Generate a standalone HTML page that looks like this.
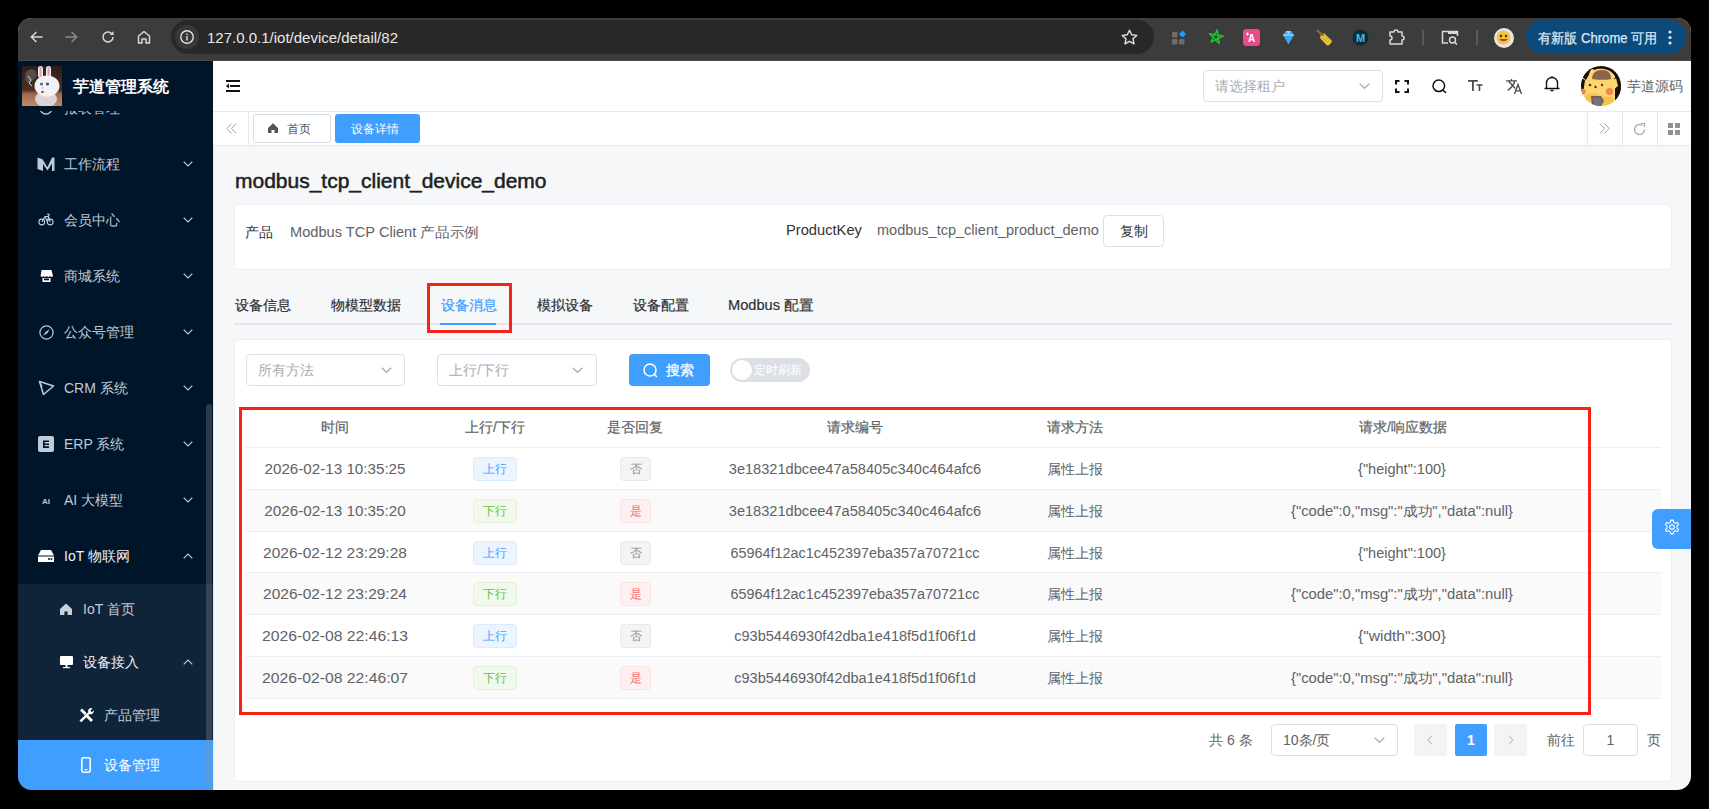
<!DOCTYPE html>
<html><head><meta charset="utf-8"><style>
*{box-sizing:border-box;margin:0;padding:0}
html,body{width:1709px;height:809px;overflow:hidden;background:#000;font-family:"Liberation Sans",sans-serif}
#win{position:absolute;left:0;top:0;width:1709px;height:809px;clip-path:inset(18px 18px 19px 18px round 14px);background:#f5f7f9;overflow:hidden}
.a{position:absolute}
.t{position:absolute;white-space:nowrap;line-height:1}
svg{position:absolute;overflow:visible}
</style></head><body><div id="win">
<div class="a" style="left:0px;top:0px;width:1709px;height:61px;background:#3c3c3c"></div>
<div class="a" style="left:0px;top:60px;width:1709px;height:1px;background:#4a4a4a"></div>
<div class="a" style="left:171px;top:20px;width:983px;height:34px;background:#282828;border-radius:17px"></div>
<div class="a" style="left:175px;top:25px;width:24px;height:24px;background:#383838;border-radius:12px"></div>
<svg style="left:180px;top:30px;" width="14" height="14" viewBox="0 0 14 14"><circle cx="7" cy="7" r="6.2" fill="none" stroke="#e3e3e3" stroke-width="1.4"/><rect x="6.3" y="6" width="1.4" height="4.5" fill="#e3e3e3"/><rect x="6.3" y="3.6" width="1.4" height="1.4" fill="#e3e3e3"/></svg>
<div class="t" style="left:207px;top:27.0px;height:21px;line-height:21px;font-size:15px;color:#e8e8e8;font-weight:normal;">127.0.0.1/iot/device/detail/82</div>
<svg style="left:30px;top:31px;" width="13" height="12" viewBox="0 0 13 12"><path d="M12.5 6H1.5M6.5 1L1.3 6l5.2 5" fill="none" stroke="#d8d8d8" stroke-width="1.5"/></svg>
<svg style="left:65px;top:31px;" width="13" height="12" viewBox="0 0 13 12"><path d="M0.5 6H11.5M6.5 1l5.2 5-5.2 5" fill="none" stroke="#8a8a8a" stroke-width="1.5"/></svg>
<svg style="left:101px;top:30px;" width="14" height="14" viewBox="0 0 14 14"><path d="M12 7a5 5 0 1 1-1.5-3.6" fill="none" stroke="#d8d8d8" stroke-width="1.5"/><path d="M12.6 1v4h-4z" fill="#d8d8d8"/></svg>
<svg style="left:137px;top:30px;" width="14" height="14" viewBox="0 0 14 14"><path d="M1.5 13V6L7 1.5 12.5 6v7H9V9H5v4z" fill="none" stroke="#d8d8d8" stroke-width="1.5" stroke-linejoin="round"/></svg>
<svg style="left:1121px;top:29px;" width="17" height="16" viewBox="0 0 17 16"><path d="M8.5 1.2l2.2 4.6 5 .6-3.7 3.4 1 5-4.5-2.5-4.5 2.5 1-5L1.3 6.4l5-.6z" fill="none" stroke="#e3e3e3" stroke-width="1.4" stroke-linejoin="round"/></svg>
<svg style="left:1172px;top:30px;" width="15" height="15" viewBox="0 0 15 15"><rect x="0" y="2" width="5.5" height="5.5" rx="1" fill="#6d6d6d"/><rect x="0" y="9" width="5.5" height="5.5" rx="1" fill="#6d6d6d"/><rect x="7" y="9" width="5.5" height="5.5" rx="1" fill="#6d6d6d"/><path d="M10.5 0.5l3.5 3.5-3.5 3.5-3.5-3.5z" fill="#1ea0ff"/></svg>
<svg style="left:1208px;top:29px;" width="16" height="16" viewBox="0 0 16 16"><path d="M9.25 0.91 L11.16 14.47 L1.64 4.62 L15.13 7.00 L2.82 13.00Z" fill="none" stroke="#22c02a" stroke-width="1.5" stroke-linejoin="round"/></svg>
<svg style="left:1243px;top:29px;" width="17" height="17" viewBox="0 0 17 17"><rect x="0" y="0" width="17" height="17" rx="3" fill="#e84a8a"/><text x="8.5" y="13" font-size="10" font-family="Liberation Sans" font-weight="bold" fill="#fff" text-anchor="middle">A</text><path d="M3 5h3M4.5 3.5v3" stroke="#fff" stroke-width="1.2"/></svg>
<svg style="left:1281px;top:30px;" width="15" height="15" viewBox="0 0 15 15"><path d="M2 5l3-4h5l3 4-5.5 9.5z" fill="#3aa8f0"/><path d="M2 5h11" stroke="#bfe4ff" stroke-width="1"/><path d="M5 1l2.5 4L10 1" fill="#8fd3ff"/></svg>
<svg style="left:1316px;top:29px;" width="17" height="17" viewBox="0 0 17 17"><path d="M1.5 1.5L6 6" stroke="#a0602a" stroke-width="2.2" stroke-linecap="round"/><path d="M5 5.5l3-1.5 8 8c-1 3-3 4.5-5 4.5L4 9z" fill="#e9c440"/><path d="M6 8l6 6M8 6.5l6 6" stroke="#c49a20" stroke-width="0.8"/><path d="M4.5 5l2.5-1 1.5 1.5-2.5 1.5z" fill="#8a5a30"/></svg>
<svg style="left:1352px;top:29px;" width="17" height="17" viewBox="0 0 17 17"><circle cx="8.5" cy="8.5" r="8" fill="#0f2a3a"/><text x="8.5" y="12.5" font-size="11" font-family="Liberation Sans" font-weight="bold" fill="#35c6e8" text-anchor="middle">M</text></svg>
<svg style="left:1388px;top:29px;" width="17" height="16" viewBox="0 0 17 16"><path d="M2 3h4a2 2 0 0 1 4 0h4v4a2 2 0 0 1 0 4v4H2v-4a2 2 0 0 0 0-4z" fill="none" stroke="#d8d8d8" stroke-width="1.5" stroke-linejoin="round"/></svg>
<div class="a" style="left:1422px;top:30px;width:2px;height:15px;background:#5a5a5a"></div>
<svg style="left:1441px;top:30px;" width="18" height="15" viewBox="0 0 18 15"><path d="M7 13H1.5V1.5h15V6" fill="none" stroke="#d8d8d8" stroke-width="1.5"/><rect x="7" y="1" width="10" height="3" fill="#d8d8d8"/><circle cx="11.5" cy="10" r="3" fill="none" stroke="#d8d8d8" stroke-width="1.5"/><path d="M13.5 12l2.5 2.5" stroke="#d8d8d8" stroke-width="1.6"/></svg>
<div class="a" style="left:1476px;top:30px;width:2px;height:15px;background:#5a5a5a"></div>
<div class="a" style="left:1493.5px;top:27.5px;width:20.0px;height:20.0px;background:#e6e6e6;border-radius:50%"></div>
<svg style="left:1496px;top:30px;" width="15" height="15" viewBox="0 0 15 15"><circle cx="7.5" cy="7.5" r="7" fill="#f5c33b"/><circle cx="5" cy="6" r="1.2" fill="#333"/><circle cx="10" cy="6" r="1.2" fill="#333"/><path d="M3.5 9c1 3 7 3 8 0z" fill="#c0392b"/></svg>
<div class="a" style="left:1526px;top:20px;width:160px;height:34px;background:#0b4a7b;border-radius:17px"></div>
<div class="t" style="left:1538px;top:27.5px;height:20px;line-height:20px;font-size:14px;color:#dce9f5;font-weight:normal;transform:scaleX(0.9367);transform-origin:0 50%;-webkit-text-stroke:0.25px #dce9f5">有新版 Chrome 可用</div>
<svg style="left:1668px;top:30px;" width="4" height="15" viewBox="0 0 4 15"><circle cx="2" cy="2" r="1.6" fill="#dce9f5"/><circle cx="2" cy="7.5" r="1.6" fill="#dce9f5"/><circle cx="2" cy="13" r="1.6" fill="#dce9f5"/></svg>
<div class="a" style="left:18px;top:61px;width:195px;height:729px;background:#001529"></div>
<svg style="left:22px;top:66px;overflow:hidden" width="40" height="40" viewBox="0 0 40 40"><defs><linearGradient id="lg1" x1="0" y1="0" x2="0" y2="1"><stop offset="0" stop-color="#2e1e18"/><stop offset="0.6" stop-color="#4a3024"/><stop offset="0.7" stop-color="#a06a4c"/><stop offset="1" stop-color="#c08a6a"/></linearGradient></defs><rect width="40" height="40" fill="url(#lg1)"/><path d="M4 6c3-3 8-4 10 0s-2 8-6 10-6-2-4-10z" fill="#5a5a5a" opacity=".8"/><path d="M6 10l3 4-2 3 3 3" stroke="#ddd" stroke-width="1" fill="none"/><rect x="16" y="0" width="5" height="12" rx="2.5" fill="#eee"/><rect x="17.5" y="1" width="2" height="10" fill="#d9a0b0"/><rect x="24" y="0" width="5" height="12" rx="2.5" fill="#eee"/><rect x="25.5" y="1" width="2" height="10" fill="#d9a0b0"/><ellipse cx="24" cy="33" rx="11" ry="8" fill="#dcd4d6"/><ellipse cx="25" cy="20" rx="12.5" ry="10.5" fill="#f2f2f4"/><circle cx="19.5" cy="18" r="1.6" fill="#4a70a0"/><circle cx="25.5" cy="18" r="1.6" fill="#3a5a8a"/><circle cx="20.5" cy="22" r="0.8" fill="#e88"/><ellipse cx="20.5" cy="26" rx="1.3" ry="1" fill="#6a4030"/></svg>
<div class="t" style="left:73px;top:76.0px;height:22px;line-height:22px;font-size:16px;color:#ffffff;font-weight:bold;">芋道管理系统</div>
<div class="a" style="left:18px;top:111px;width:195px;height:679px;overflow:hidden">
<div class="t" style="left:46px;top:-13.0px;height:20px;line-height:20px;font-size:14px;color:#bfcbd9;font-weight:normal;">报表管理</div>
<svg style="left:21px;top:-10px" width="14" height="14" viewBox="0 0 14 14"><circle cx="7" cy="7" r="6" fill="none" stroke="#bfcbd9" stroke-width="1.3"/></svg>
<svg style="left:165px;top:-6px" width="10" height="6" viewBox="0 0 10 6"><path d="M0.7 0.7L5 5l4.3-4.3" fill="none" stroke="#bfcbd9" stroke-width="1.2"/></svg>
<div class="t" style="left:46px;top:43.0px;height:20px;line-height:20px;font-size:14px;color:#bfcbd9;font-weight:normal;">工作流程</div>
<svg style="left:19px;top:46px" width="18" height="14" viewBox="0 0 18 14"><path d="M0.5 0.5L6 2.5V14L0.5 12z" fill="#bfcbd9"/><path d="M6 2.5L10.5 10 15 0.5h2.5V14H15V6.5l-4.5 7L6 7z" fill="#bfcbd9"/><path d="M6 2.5l4.5 7.5" stroke="#001529" stroke-width="0.6"/></svg>
<svg style="left:165px;top:50px" width="10" height="6" viewBox="0 0 10 6"><path d="M0.7 0.7L5 5l4.3-4.3" fill="none" stroke="#bfcbd9" stroke-width="1.2"/></svg>
<div class="t" style="left:46px;top:99.0px;height:20px;line-height:20px;font-size:14px;color:#bfcbd9;font-weight:normal;">会员中心</div>
<svg style="left:20px;top:102px" width="16" height="13" viewBox="0 0 16 13"><circle cx="3.8" cy="9" r="2.9" fill="none" stroke="#bfcbd9" stroke-width="1.1"/><circle cx="12.2" cy="9" r="2.9" fill="none" stroke="#bfcbd9" stroke-width="1.1"/><path d="M3.8 9L7 3.5h3.5l1.7 5.5M7 3.5L9.5 9 10.5 3.5M9 1.2h2.2l-.7 2.3" fill="none" stroke="#bfcbd9" stroke-width="1.1"/></svg>
<svg style="left:165px;top:106px" width="10" height="6" viewBox="0 0 10 6"><path d="M0.7 0.7L5 5l4.3-4.3" fill="none" stroke="#bfcbd9" stroke-width="1.2"/></svg>
<div class="t" style="left:46px;top:155.0px;height:20px;line-height:20px;font-size:14px;color:#bfcbd9;font-weight:normal;">商城系统</div>
<svg style="left:22px;top:159px" width="13" height="12" viewBox="0 0 13 12"><path d="M1.5 0h10l1.5 6c-1 1.2-2 1.2-3 0-1 1.2-2.2 1.2-3.2 0-1 1.2-2.2 1.2-3.2 0-1 1.2-2 1.2-3 0z" fill="#fff"/><path d="M2.5 8h8v4h-8z" fill="#fff"/><path d="M4 8.5h5v1.8H4z" fill="#001529"/></svg>
<svg style="left:165px;top:162px" width="10" height="6" viewBox="0 0 10 6"><path d="M0.7 0.7L5 5l4.3-4.3" fill="none" stroke="#bfcbd9" stroke-width="1.2"/></svg>
<div class="t" style="left:46px;top:211.0px;height:20px;line-height:20px;font-size:14px;color:#bfcbd9;font-weight:normal;">公众号管理</div>
<svg style="left:21px;top:214px" width="15" height="15" viewBox="0 0 15 15"><circle cx="7.5" cy="7.5" r="6.6" fill="none" stroke="#bfcbd9" stroke-width="1.2"/><path d="M10.8 4.2L8.3 8.3 4.2 10.8 6.7 6.7z" fill="#bfcbd9"/></svg>
<svg style="left:165px;top:218px" width="10" height="6" viewBox="0 0 10 6"><path d="M0.7 0.7L5 5l4.3-4.3" fill="none" stroke="#bfcbd9" stroke-width="1.2"/></svg>
<div class="t" style="left:46px;top:267.0px;height:20px;line-height:20px;font-size:14px;color:#bfcbd9;font-weight:normal;">CRM 系统</div>
<svg style="left:20px;top:269px" width="17" height="16" viewBox="0 0 17 16"><path d="M1.5 1.5L15.5 6 5.5 14.5z" fill="none" stroke="#bfcbd9" stroke-width="1.5" stroke-linejoin="round"/><path d="M1.5 1.5L4 7" stroke="#bfcbd9" stroke-width="1.3"/></svg>
<svg style="left:165px;top:274px" width="10" height="6" viewBox="0 0 10 6"><path d="M0.7 0.7L5 5l4.3-4.3" fill="none" stroke="#bfcbd9" stroke-width="1.2"/></svg>
<div class="t" style="left:46px;top:323.0px;height:20px;line-height:20px;font-size:14px;color:#bfcbd9;font-weight:normal;">ERP 系统</div>
<svg style="left:20px;top:325px" width="16" height="16" viewBox="0 0 16 16"><rect x="0" y="0" width="16" height="16" rx="2" fill="#bfcbd9"/><path d="M5 4.5h6v1.6H6.6v1.3H11V9H6.6v1.3H11V12H5z" fill="#001529"/></svg>
<svg style="left:165px;top:330px" width="10" height="6" viewBox="0 0 10 6"><path d="M0.7 0.7L5 5l4.3-4.3" fill="none" stroke="#bfcbd9" stroke-width="1.2"/></svg>
<div class="t" style="left:46px;top:379.0px;height:20px;line-height:20px;font-size:14px;color:#bfcbd9;font-weight:normal;">AI 大模型</div>
<svg style="left:24px;top:385px" width="9" height="8" viewBox="0 0 9 8"><text x="0" y="7.5" font-size="8" font-family="Liberation Sans" font-weight="bold" fill="#bfcbd9">AI</text></svg>
<svg style="left:165px;top:386px" width="10" height="6" viewBox="0 0 10 6"><path d="M0.7 0.7L5 5l4.3-4.3" fill="none" stroke="#bfcbd9" stroke-width="1.2"/></svg>
<div class="t" style="left:46px;top:435.0px;height:20px;line-height:20px;font-size:14px;color:#eef2f6;font-weight:normal;">IoT 物联网</div>
<svg style="left:20px;top:439px" width="16" height="12" viewBox="0 0 16 12"><path d="M3 0h10l3 5.5V12H0V5.5z" fill="#fff"/><path d="M0 6h16" stroke="#001529" stroke-width="1"/><circle cx="11" cy="9" r="1" fill="#001529"/><circle cx="13.5" cy="9" r="1" fill="#001529"/></svg>
<svg style="left:165px;top:442px" width="10" height="6" viewBox="0 0 10 6"><path d="M0.7 5.3L5 1l4.3 4.3" fill="none" stroke="#bfcbd9" stroke-width="1.2"/></svg>
<div class="a" style="left:0px;top:473px;width:195px;height:206px;background:#0f2439"></div>
<div class="t" style="left:65px;top:488.0px;height:20px;line-height:20px;font-size:14px;color:#bfcbd9;font-weight:normal;">IoT 首页</div>
<svg style="left:42px;top:492px" width="12" height="12" viewBox="0 0 12 12"><path d="M6 0.5L12 6v6H7.6V8.5H4.4V12H0V6z" fill="#c8d0da"/></svg>
<div class="t" style="left:65px;top:541.0px;height:20px;line-height:20px;font-size:14px;color:#eef2f6;font-weight:normal;">设备接入</div>
<svg style="left:42px;top:545px" width="13" height="12" viewBox="0 0 13 12"><rect x="0" y="0" width="13" height="9" rx="1" fill="#fff"/><rect x="5.5" y="9" width="2" height="2" fill="#fff"/><rect x="3" y="11" width="7" height="1.2" fill="#fff"/></svg>
<svg style="left:165px;top:548px" width="10" height="6" viewBox="0 0 10 6"><path d="M0.7 5.3L5 1l4.3 4.3" fill="none" stroke="#bfcbd9" stroke-width="1.2"/></svg>
<div class="t" style="left:86px;top:594.0px;height:20px;line-height:20px;font-size:14px;color:#bfcbd9;font-weight:normal;">产品管理</div>
<svg style="left:60px;top:596px" width="17" height="16" viewBox="0 0 17 16"><path d="M2 3.5L4 1.5l4.5 4.5-2 2z" fill="#fff"/><path d="M6.5 8.5l2-2 6.5 6.5-2 2z" fill="#fff"/><path d="M13.5 1a3.2 3.2 0 0 0-3.3 4.2L1.5 13.5l1.8 1.8 8.3-8.3A3.2 3.2 0 0 0 15.8 3.3l-2 2-1.5-1.5 2-2z" fill="#fff"/></svg>
<div class="a" style="left:0px;top:629px;width:195px;height:50px;background:#409eff"></div>
<div class="t" style="left:86px;top:644.0px;height:20px;line-height:20px;font-size:14px;color:#ffffff;font-weight:normal;">设备管理</div>
<svg style="left:63px;top:646px" width="10" height="16" viewBox="0 0 10 16"><rect x="0.8" y="0.8" width="8.4" height="14.4" rx="1.6" fill="none" stroke="#fff" stroke-width="1.6"/><rect x="3.5" y="12" width="3" height="1.2" fill="#fff"/></svg>
</div>
<div class="a" style="left:206px;top:404px;width:6px;height:388px;background:rgba(144,147,153,0.3);border-radius:3px"></div>
<div class="a" style="left:213px;top:61px;width:1478px;height:50px;background:#fff"></div>
<div class="a" style="left:213px;top:111px;width:1478px;height:1px;background:#e6e8eb"></div>
<svg style="left:226px;top:80px;" width="14" height="12" viewBox="0 0 14 12"><rect x="0" y="0" width="14" height="2" fill="#111"/><rect x="4" y="5" width="10" height="2" fill="#111"/><rect x="0" y="10" width="14" height="2" fill="#111"/><path d="M0 6l3-2.5v5z" fill="#111"/></svg>
<div class="a" style="left:1203px;top:70px;width:180px;height:32px;border:1px solid #dcdfe6;border-radius:4px;background:#fff"></div>
<div class="t" style="left:1215px;top:76.0px;height:20px;line-height:20px;font-size:14px;color:#a8abb2;font-weight:normal;">请选择租户</div>
<svg style="left:1359px;top:83px;" width="11" height="6" viewBox="0 0 11 6"><path d="M0.7 0.7L5.5 5.3l4.8-4.6" fill="none" stroke="#a8abb2" stroke-width="1.2"/></svg>
<svg style="left:1395px;top:80px;" width="14" height="13" viewBox="0 0 14 13"><path d="M1 4.5V1h3.5M9.5 1H13v3.5M13 8.5V12H9.5M4.5 12H1V8.5" fill="none" stroke="#111" stroke-width="2"/></svg>
<svg style="left:1432px;top:79px;" width="15" height="15" viewBox="0 0 15 15"><circle cx="6.8" cy="6.8" r="5.8" fill="none" stroke="#111" stroke-width="1.5"/><path d="M11 11l3 3" stroke="#111" stroke-width="1.5"/></svg>
<svg style="left:1468px;top:80px;" width="15" height="12" viewBox="0 0 15 12"><path d="M0 0.9h9.8M4.9 0.9V11" stroke="#4a4a4a" stroke-width="1.8" fill="none"/><path d="M8.5 5h6M11.5 5V11" stroke="#4a4a4a" stroke-width="1.6" fill="none"/></svg>
<svg style="left:1506px;top:79px;" width="16" height="15" viewBox="0 0 16 15"><path d="M0 1.8h11M5.5 0v1.8M2.8 2.5l6.5 7M8.8 2.5C7.5 6 5 9 1.8 11.5" stroke="#4a4a4a" stroke-width="1.3" fill="none"/><path d="M8.5 15l3.5-9.5 3.5 9.5M9.8 11.8h4.4" stroke="#4a4a4a" stroke-width="1.3" fill="none"/></svg>
<svg style="left:1544px;top:76px;" width="16" height="16" viewBox="0 0 16 16"><path d="M2.5 12V7a5.5 5.5 0 0 1 11 0v5M0.5 12.5h15" fill="none" stroke="#111" stroke-width="1.4"/><path d="M6.5 14.5h3" stroke="#111" stroke-width="1.4"/><circle cx="8" cy="1.2" r="1" fill="#111"/></svg>
<svg style="left:1581px;top:66px;" width="40" height="40" viewBox="0 0 40 40"><defs><clipPath id="avc"><circle cx="20" cy="20" r="20"/></clipPath></defs><g clip-path="url(#avc)"><rect width="40" height="40" fill="#fbd66e"/><path d="M0 0h40v40h-6V10c-4-6-10-8-18-7L10 5 5 14 0 10z" fill="#1c0e08"/><path d="M33 12c3 0 5 6 7 10v18h-6c0-8 4-14 0-16z" fill="#1c0e08"/><path d="M0 12l4 2-2 14-2 2z" fill="#1c0e08"/><path d="M8 14c-1-4 1-10 3-11 3 0 4 4 4 8z" fill="#fbd66e"/><path d="M11 13c0-6 4-9 10-9s9 3 9 9c-2 1-16 1-19 0z" fill="#8a6349"/><path d="M30 16l5-4 2 8-5 4z" fill="#fbd66e"/><circle cx="9" cy="19" r="1.3" fill="#5a2a10"/><circle cx="14.5" cy="21" r="1.2" fill="#5a2a10"/><circle cx="21" cy="19" r="1.2" fill="#5a3a10"/><circle cx="28.5" cy="25.5" r="3.6" fill="#f08550"/><circle cx="2" cy="25.5" r="2.8" fill="#f08550"/><path d="M4 30c4-3 10-3 14-1l8 2 6 0 2 10H4z" fill="#f5c250"/><path d="M10 30h10l3 5-3 5H11z" fill="#7a5a48"/><path d="M11.5 31.5h8l1.5 3.5-1.5 4h-7z" fill="#6e7480"/></g></svg>
<div class="t" style="left:1627px;top:76.0px;height:20px;line-height:20px;font-size:14px;color:#606266;font-weight:normal;">芋道源码</div>
<div class="a" style="left:213px;top:112px;width:1478px;height:33px;background:#fff"></div>
<div class="a" style="left:213px;top:145px;width:1478px;height:1px;background:#e4e7ed"></div>
<div class="a" style="left:248px;top:112px;width:1px;height:33px;background:#e4e7ed"></div>
<svg style="left:226px;top:123px;" width="11" height="11" viewBox="0 0 11 11"><path d="M5.5 0.5L0.8 5.5l4.7 5M10.2 0.5L5.5 5.5l4.7 5" fill="none" stroke="#a0a3a8" stroke-width="1"/></svg>
<div class="a" style="left:253px;top:114px;width:78px;height:29px;border:1px solid #d8dce5;border-radius:3px;background:#fff"></div>
<svg style="left:268px;top:123px;" width="10" height="10" viewBox="0 0 10 10"><path d="M5 0.3L10 5v5H6.5V7h-3v3H0V5z" fill="#555"/></svg>
<div class="t" style="left:287px;top:119.5px;height:18px;line-height:18px;font-size:12px;color:#495060;font-weight:normal;">首页</div>
<div class="a" style="left:335px;top:114px;width:85px;height:29px;background:#409eff;border-radius:3px"></div>
<div class="t" style="left:351px;top:119.5px;height:18px;line-height:18px;font-size:12px;color:#fff;font-weight:normal;">设备详情</div>
<div class="a" style="left:1587px;top:112px;width:1px;height:33px;background:#e4e7ed"></div>
<div class="a" style="left:1622px;top:112px;width:1px;height:33px;background:#e4e7ed"></div>
<div class="a" style="left:1657px;top:112px;width:1px;height:33px;background:#e4e7ed"></div>
<svg style="left:1599px;top:123px;" width="11" height="11" viewBox="0 0 11 11"><path d="M0.8 0.5L5.5 5.5l-4.7 5M5.5 0.5l4.7 5-4.7 5" fill="none" stroke="#a0a3a8" stroke-width="1"/></svg>
<svg style="left:1633px;top:123px;" width="13" height="13" viewBox="0 0 13 13"><path d="M11.5 6.5A5 5 0 1 1 9.5 2.5" fill="none" stroke="#a0a3a8" stroke-width="1.2"/><path d="M8 0.5h3.5V4" fill="none" stroke="#a0a3a8" stroke-width="1.2"/></svg>
<svg style="left:1668px;top:123px;" width="12" height="12" viewBox="0 0 12 12"><rect x="0" y="0" width="5" height="5" fill="#8e9298"/><rect x="7" y="0" width="5" height="5" fill="#8e9298"/><rect x="0" y="7" width="5" height="5" fill="#8e9298"/><rect x="7" y="7" width="5" height="5" fill="#8e9298"/></svg>
<div class="a" style="left:213px;top:146px;width:1px;height:644px;background:#e4e7ed"></div>
<div class="t" style="left:234.5px;top:168.0px;height:26px;line-height:26px;font-size:20px;color:#1d1e20;font-weight:normal;transform:scaleX(1.0493);transform-origin:0 50%;-webkit-text-stroke:0.5px #1d1e20">modbus_tcp_client_device_demo</div>
<div class="a" style="left:234px;top:204px;width:1438px;height:66px;background:#fff;border:1px solid #ebeef5;border-radius:4px"></div>
<div class="t" style="left:245px;top:221.5px;height:20px;line-height:20px;font-size:14px;color:#303133;font-weight:normal;">产品</div>
<div class="t" style="left:289.5px;top:221.5px;height:20px;line-height:20px;font-size:14px;color:#606266;font-weight:normal;transform:scaleX(1.0450);transform-origin:0 50%;">Modbus TCP Client 产品示例</div>
<div class="t" style="left:785.5px;top:220.0px;height:20px;line-height:20px;font-size:14px;color:#303133;font-weight:normal;transform:scaleX(1.0487);transform-origin:0 50%;">ProductKey</div>
<div class="t" style="left:877px;top:220.0px;height:20px;line-height:20px;font-size:14px;color:#606266;font-weight:normal;transform:scaleX(1.0363);transform-origin:0 50%;">modbus_tcp_client_product_demo</div>
<div class="a" style="left:1103px;top:215px;width:61px;height:32px;background:#fff;border:1px solid #dcdfe6;border-radius:4px"></div>
<div class="t" style="left:833.5px;width:600px;text-align:center;top:221.0px;height:20px;line-height:20px;font-size:14px;color:#303133;font-weight:normal;">复制</div>
<div class="a" style="left:234px;top:323px;width:1438px;height:2px;background:#e4e7ed"></div>
<div class="t" style="left:235px;top:295.0px;height:20px;line-height:20px;font-size:14px;color:#303133;font-weight:normal;-webkit-text-stroke:0.2px #303133">设备信息</div>
<div class="t" style="left:331px;top:295.0px;height:20px;line-height:20px;font-size:14px;color:#303133;font-weight:normal;-webkit-text-stroke:0.2px #303133">物模型数据</div>
<div class="t" style="left:441px;top:295.0px;height:20px;line-height:20px;font-size:14px;color:#409eff;font-weight:normal;-webkit-text-stroke:0.2px #409eff">设备消息</div>
<div class="t" style="left:536.5px;top:295.0px;height:20px;line-height:20px;font-size:14px;color:#303133;font-weight:normal;-webkit-text-stroke:0.2px #303133">模拟设备</div>
<div class="t" style="left:632.5px;top:295.0px;height:20px;line-height:20px;font-size:14px;color:#303133;font-weight:normal;-webkit-text-stroke:0.2px #303133">设备配置</div>
<div class="t" style="left:728px;top:295.0px;height:20px;line-height:20px;font-size:14px;color:#303133;font-weight:normal;transform:scaleX(1.0440);transform-origin:0 50%;-webkit-text-stroke:0.2px #303133">Modbus 配置</div>
<div class="a" style="left:440px;top:323px;width:56px;height:2px;background:#409eff"></div>
<div class="a" style="left:427px;top:283px;width:85px;height:50px;border:3px solid #f82316"></div>
<div class="a" style="left:234px;top:339px;width:1438px;height:443px;background:#fff;border:1px solid #ebeef5;border-radius:4px"></div>
<div class="a" style="left:246px;top:354px;width:159px;height:32px;background:#fff;border:1px solid #dcdfe6;border-radius:4px"></div>
<div class="t" style="left:258px;top:360.0px;height:20px;line-height:20px;font-size:14px;color:#a8abb2;font-weight:normal;">所有方法</div>
<svg style="left:381px;top:367.0px;" width="11" height="6" viewBox="0 0 11 6"><path d="M0.7 0.7L5.5 5.3l4.8-4.6" fill="none" stroke="#a8abb2" stroke-width="1.2"/></svg>
<div class="a" style="left:437px;top:354px;width:160px;height:32px;background:#fff;border:1px solid #dcdfe6;border-radius:4px"></div>
<div class="t" style="left:449px;top:360.0px;height:20px;line-height:20px;font-size:14px;color:#a8abb2;font-weight:normal;">上行/下行</div>
<svg style="left:572px;top:367.0px;" width="11" height="6" viewBox="0 0 11 6"><path d="M0.7 0.7L5.5 5.3l4.8-4.6" fill="none" stroke="#a8abb2" stroke-width="1.2"/></svg>
<div class="a" style="left:629px;top:354px;width:81px;height:32px;background:#409eff;border-radius:4px"></div>
<svg style="left:643px;top:363px;" width="15" height="15" viewBox="0 0 15 15"><circle cx="7" cy="7" r="6" fill="none" stroke="#fff" stroke-width="1.5"/><path d="M11.2 11.2l2.8 2.8" stroke="#fff" stroke-width="1.5"/></svg>
<div class="t" style="left:666px;top:360.0px;height:20px;line-height:20px;font-size:14px;color:#fff;font-weight:normal;-webkit-text-stroke:0.3px #fff">搜索</div>
<div class="a" style="left:730px;top:358px;width:80px;height:24px;background:#dcdfe6;border-radius:12px"></div>
<div class="a" style="left:732px;top:360px;width:20px;height:20px;background:#fff;border-radius:50%"></div>
<div class="t" style="left:754px;top:361.0px;height:18px;line-height:18px;font-size:12px;color:#fff;font-weight:normal;">定时刷新</div>
<div class="a" style="left:245px;top:447px;width:1416px;height:1px;background:#ebeef5"></div>
<div class="t" style="left:35.0px;width:600px;text-align:center;top:416.8px;height:20px;line-height:20px;font-size:14px;color:#606266;font-weight:normal;-webkit-text-stroke:0.2px #606266">时间</div>
<div class="t" style="left:195.0px;width:600px;text-align:center;top:416.8px;height:20px;line-height:20px;font-size:14px;color:#606266;font-weight:normal;-webkit-text-stroke:0.2px #606266">上行/下行</div>
<div class="t" style="left:335.0px;width:600px;text-align:center;top:416.8px;height:20px;line-height:20px;font-size:14px;color:#606266;font-weight:normal;-webkit-text-stroke:0.2px #606266">是否回复</div>
<div class="t" style="left:555.0px;width:600px;text-align:center;top:416.8px;height:20px;line-height:20px;font-size:14px;color:#606266;font-weight:normal;-webkit-text-stroke:0.2px #606266">请求编号</div>
<div class="t" style="left:775.0px;width:600px;text-align:center;top:416.8px;height:20px;line-height:20px;font-size:14px;color:#606266;font-weight:normal;-webkit-text-stroke:0.2px #606266">请求方法</div>
<div class="t" style="left:1103.0px;width:600px;text-align:center;top:416.8px;height:20px;line-height:20px;font-size:14px;color:#606266;font-weight:normal;-webkit-text-stroke:0.2px #606266">请求/响应数据</div>
<div class="a" style="left:245px;top:489px;width:1416px;height:1px;background:#ebeef5"></div>
<div class="t" style="left:35px;width:600px;text-align:center;top:459.2px;height:20px;line-height:20px;font-size:14px;color:#606266;font-weight:normal;transform:scaleX(1.0846);transform-origin:50% 50%;">2026-02-13 10:35:25</div>
<div class="a" style="left:473px;top:457px;width:44px;height:24px;background:#ecf5ff;border:1px solid #d9ecff;border-radius:4px"></div>
<div class="t" style="left:195px;width:600px;text-align:center;top:460.2px;height:18px;line-height:18px;font-size:12px;color:#409eff;font-weight:normal;">上行</div>
<div class="a" style="left:620px;top:457px;width:31px;height:24px;background:#f4f4f5;border:1px solid #e9e9eb;border-radius:4px"></div>
<div class="t" style="left:335.5px;width:600px;text-align:center;top:460.2px;height:18px;line-height:18px;font-size:12px;color:#909399;font-weight:normal;">否</div>
<div class="t" style="left:555px;width:600px;text-align:center;top:459.2px;height:20px;line-height:20px;font-size:14px;color:#606266;font-weight:normal;transform:scaleX(1.0428);transform-origin:50% 50%;">3e18321dbcee47a58405c340c464afc6</div>
<div class="t" style="left:775px;width:600px;text-align:center;top:459.2px;height:20px;line-height:20px;font-size:14px;color:#606266;font-weight:normal;">属性上报</div>
<div class="t" style="left:1102px;width:600px;text-align:center;top:459.2px;height:20px;line-height:20px;font-size:14px;color:#606266;font-weight:normal;transform:scaleX(1.0368);transform-origin:50% 50%;">{&quot;height&quot;:100}</div>
<div class="a" style="left:245px;top:490px;width:1416px;height:41px;background:#fafafa"></div>
<div class="a" style="left:245px;top:531px;width:1416px;height:1px;background:#ebeef5"></div>
<div class="t" style="left:35px;width:600px;text-align:center;top:500.9px;height:20px;line-height:20px;font-size:14px;color:#606266;font-weight:normal;transform:scaleX(1.0885);transform-origin:50% 50%;">2026-02-13 10:35:20</div>
<div class="a" style="left:473px;top:499px;width:44px;height:24px;background:#f0f9eb;border:1px solid #e1f3d8;border-radius:4px"></div>
<div class="t" style="left:195px;width:600px;text-align:center;top:501.9px;height:18px;line-height:18px;font-size:12px;color:#67c23a;font-weight:normal;">下行</div>
<div class="a" style="left:620px;top:499px;width:31px;height:24px;background:#fef0f0;border:1px solid #fde2e2;border-radius:4px"></div>
<div class="t" style="left:335.5px;width:600px;text-align:center;top:501.9px;height:18px;line-height:18px;font-size:12px;color:#f56c6c;font-weight:normal;">是</div>
<div class="t" style="left:555px;width:600px;text-align:center;top:500.9px;height:20px;line-height:20px;font-size:14px;color:#606266;font-weight:normal;transform:scaleX(1.0428);transform-origin:50% 50%;">3e18321dbcee47a58405c340c464afc6</div>
<div class="t" style="left:775px;width:600px;text-align:center;top:500.9px;height:20px;line-height:20px;font-size:14px;color:#606266;font-weight:normal;">属性上报</div>
<div class="t" style="left:1102px;width:600px;text-align:center;top:500.9px;height:20px;line-height:20px;font-size:14px;color:#606266;font-weight:normal;transform:scaleX(1.0566);transform-origin:50% 50%;">{&quot;code&quot;:0,&quot;msg&quot;:&quot;成功&quot;,&quot;data&quot;:null}</div>
<div class="a" style="left:245px;top:572px;width:1416px;height:1px;background:#ebeef5"></div>
<div class="t" style="left:35px;width:600px;text-align:center;top:542.6px;height:20px;line-height:20px;font-size:14px;color:#606266;font-weight:normal;transform:scaleX(1.1062);transform-origin:50% 50%;">2026-02-12 23:29:28</div>
<div class="a" style="left:473px;top:541px;width:44px;height:24px;background:#ecf5ff;border:1px solid #d9ecff;border-radius:4px"></div>
<div class="t" style="left:195px;width:600px;text-align:center;top:543.6px;height:18px;line-height:18px;font-size:12px;color:#409eff;font-weight:normal;">上行</div>
<div class="a" style="left:620px;top:541px;width:31px;height:24px;background:#f4f4f5;border:1px solid #e9e9eb;border-radius:4px"></div>
<div class="t" style="left:335.5px;width:600px;text-align:center;top:543.6px;height:18px;line-height:18px;font-size:12px;color:#909399;font-weight:normal;">否</div>
<div class="t" style="left:555px;width:600px;text-align:center;top:542.6px;height:20px;line-height:20px;font-size:14px;color:#606266;font-weight:normal;transform:scaleX(1.0280);transform-origin:50% 50%;">65964f12ac1c452397eba357a70721cc</div>
<div class="t" style="left:775px;width:600px;text-align:center;top:542.6px;height:20px;line-height:20px;font-size:14px;color:#606266;font-weight:normal;">属性上报</div>
<div class="t" style="left:1102px;width:600px;text-align:center;top:542.6px;height:20px;line-height:20px;font-size:14px;color:#606266;font-weight:normal;transform:scaleX(1.0368);transform-origin:50% 50%;">{&quot;height&quot;:100}</div>
<div class="a" style="left:245px;top:573px;width:1416px;height:41px;background:#fafafa"></div>
<div class="a" style="left:245px;top:614px;width:1416px;height:1px;background:#ebeef5"></div>
<div class="t" style="left:35px;width:600px;text-align:center;top:584.4px;height:20px;line-height:20px;font-size:14px;color:#606266;font-weight:normal;transform:scaleX(1.1062);transform-origin:50% 50%;">2026-02-12 23:29:24</div>
<div class="a" style="left:473px;top:582px;width:44px;height:24px;background:#f0f9eb;border:1px solid #e1f3d8;border-radius:4px"></div>
<div class="t" style="left:195px;width:600px;text-align:center;top:585.4px;height:18px;line-height:18px;font-size:12px;color:#67c23a;font-weight:normal;">下行</div>
<div class="a" style="left:620px;top:582px;width:31px;height:24px;background:#fef0f0;border:1px solid #fde2e2;border-radius:4px"></div>
<div class="t" style="left:335.5px;width:600px;text-align:center;top:585.4px;height:18px;line-height:18px;font-size:12px;color:#f56c6c;font-weight:normal;">是</div>
<div class="t" style="left:555px;width:600px;text-align:center;top:584.4px;height:20px;line-height:20px;font-size:14px;color:#606266;font-weight:normal;transform:scaleX(1.0280);transform-origin:50% 50%;">65964f12ac1c452397eba357a70721cc</div>
<div class="t" style="left:775px;width:600px;text-align:center;top:584.4px;height:20px;line-height:20px;font-size:14px;color:#606266;font-weight:normal;">属性上报</div>
<div class="t" style="left:1102px;width:600px;text-align:center;top:584.4px;height:20px;line-height:20px;font-size:14px;color:#606266;font-weight:normal;transform:scaleX(1.0566);transform-origin:50% 50%;">{&quot;code&quot;:0,&quot;msg&quot;:&quot;成功&quot;,&quot;data&quot;:null}</div>
<div class="a" style="left:245px;top:656px;width:1416px;height:1px;background:#ebeef5"></div>
<div class="t" style="left:35px;width:600px;text-align:center;top:626.0px;height:20px;line-height:20px;font-size:14px;color:#606266;font-weight:normal;transform:scaleX(1.1238);transform-origin:50% 50%;">2026-02-08 22:46:13</div>
<div class="a" style="left:473px;top:624px;width:44px;height:24px;background:#ecf5ff;border:1px solid #d9ecff;border-radius:4px"></div>
<div class="t" style="left:195px;width:600px;text-align:center;top:627.0px;height:18px;line-height:18px;font-size:12px;color:#409eff;font-weight:normal;">上行</div>
<div class="a" style="left:620px;top:624px;width:31px;height:24px;background:#f4f4f5;border:1px solid #e9e9eb;border-radius:4px"></div>
<div class="t" style="left:335.5px;width:600px;text-align:center;top:627.0px;height:18px;line-height:18px;font-size:12px;color:#909399;font-weight:normal;">否</div>
<div class="t" style="left:555px;width:600px;text-align:center;top:626.0px;height:20px;line-height:20px;font-size:14px;color:#606266;font-weight:normal;transform:scaleX(1.0374);transform-origin:50% 50%;">c93b5446930f42dba1e418f5d1f06f1d</div>
<div class="t" style="left:775px;width:600px;text-align:center;top:626.0px;height:20px;line-height:20px;font-size:14px;color:#606266;font-weight:normal;">属性上报</div>
<div class="t" style="left:1102px;width:600px;text-align:center;top:626.0px;height:20px;line-height:20px;font-size:14px;color:#606266;font-weight:normal;transform:scaleX(1.1094);transform-origin:50% 50%;">{&quot;width&quot;:300}</div>
<div class="a" style="left:245px;top:657px;width:1416px;height:41px;background:#fafafa"></div>
<div class="a" style="left:245px;top:698px;width:1416px;height:1px;background:#ebeef5"></div>
<div class="t" style="left:35px;width:600px;text-align:center;top:667.8px;height:20px;line-height:20px;font-size:14px;color:#606266;font-weight:normal;transform:scaleX(1.1238);transform-origin:50% 50%;">2026-02-08 22:46:07</div>
<div class="a" style="left:473px;top:666px;width:44px;height:24px;background:#f0f9eb;border:1px solid #e1f3d8;border-radius:4px"></div>
<div class="t" style="left:195px;width:600px;text-align:center;top:668.8px;height:18px;line-height:18px;font-size:12px;color:#67c23a;font-weight:normal;">下行</div>
<div class="a" style="left:620px;top:666px;width:31px;height:24px;background:#fef0f0;border:1px solid #fde2e2;border-radius:4px"></div>
<div class="t" style="left:335.5px;width:600px;text-align:center;top:668.8px;height:18px;line-height:18px;font-size:12px;color:#f56c6c;font-weight:normal;">是</div>
<div class="t" style="left:555px;width:600px;text-align:center;top:667.8px;height:20px;line-height:20px;font-size:14px;color:#606266;font-weight:normal;transform:scaleX(1.0374);transform-origin:50% 50%;">c93b5446930f42dba1e418f5d1f06f1d</div>
<div class="t" style="left:775px;width:600px;text-align:center;top:667.8px;height:20px;line-height:20px;font-size:14px;color:#606266;font-weight:normal;">属性上报</div>
<div class="t" style="left:1102px;width:600px;text-align:center;top:667.8px;height:20px;line-height:20px;font-size:14px;color:#606266;font-weight:normal;transform:scaleX(1.0566);transform-origin:50% 50%;">{&quot;code&quot;:0,&quot;msg&quot;:&quot;成功&quot;,&quot;data&quot;:null}</div>
<div class="a" style="left:239px;top:407px;width:1352px;height:308px;border:3px solid #f82316"></div>
<div class="t" style="left:1209px;top:730.0px;height:20px;line-height:20px;font-size:14px;color:#606266;font-weight:normal;">共 6 条</div>
<div class="a" style="left:1271px;top:724px;width:127px;height:32px;background:#fff;border:1px solid #dcdfe6;border-radius:4px"></div>
<div class="t" style="left:1283px;top:730.0px;height:20px;line-height:20px;font-size:14px;color:#606266;font-weight:normal;">10条/页</div>
<svg style="left:1374px;top:737px;" width="11" height="6" viewBox="0 0 11 6"><path d="M0.7 0.7L5.5 5.3l4.8-4.6" fill="none" stroke="#a8abb2" stroke-width="1.2"/></svg>
<div class="a" style="left:1414px;top:724px;width:33px;height:32px;background:#f4f4f5;border-radius:2px"></div>
<svg style="left:1427px;top:735px;" width="6" height="10" viewBox="0 0 6 10"><path d="M5 0.7L0.9 5 5 9.3" fill="none" stroke="#c0c4cc" stroke-width="1.2"/></svg>
<div class="a" style="left:1455px;top:724px;width:32px;height:32px;background:#409eff;border-radius:2px"></div>
<div class="t" style="left:1171px;width:600px;text-align:center;top:730.0px;height:20px;line-height:20px;font-size:14px;color:#fff;font-weight:bold;">1</div>
<div class="a" style="left:1494px;top:724px;width:33px;height:32px;background:#f4f4f5;border-radius:2px"></div>
<svg style="left:1508px;top:735px;" width="6" height="10" viewBox="0 0 6 10"><path d="M0.9 0.7L5 5 0.9 9.3" fill="none" stroke="#c0c4cc" stroke-width="1.2"/></svg>
<div class="t" style="left:1547px;top:730.0px;height:20px;line-height:20px;font-size:14px;color:#606266;font-weight:normal;">前往</div>
<div class="a" style="left:1583px;top:724px;width:55px;height:32px;background:#fff;border:1px solid #dcdfe6;border-radius:4px"></div>
<div class="t" style="left:1310.5px;width:600px;text-align:center;top:730.0px;height:20px;line-height:20px;font-size:14px;color:#606266;font-weight:normal;">1</div>
<div class="t" style="left:1647px;top:730.0px;height:20px;line-height:20px;font-size:14px;color:#606266;font-weight:normal;">页</div>
<div class="a" style="left:1652px;top:509px;width:48px;height:40px;background:#409eff;border-radius:6px 0 0 6px"></div>
<svg style="left:1664px;top:519px;" width="16" height="16" viewBox="0 0 16 16"><path d="M6.46 3.03 L6.82 1.10 L9.18 1.10 L9.54 3.03 L11.53 4.19 L13.38 3.52 L14.57 5.58 L13.07 6.85 L13.07 9.15 L14.57 10.42 L13.38 12.48 L11.53 11.81 L9.54 12.97 L9.18 14.90 L6.82 14.90 L6.46 12.97 L4.47 11.81 L2.62 12.48 L1.43 10.42 L2.93 9.15 L2.93 6.85 L1.43 5.58 L2.62 3.52 L4.47 4.19Z" fill="none" stroke="#fff" stroke-width="1.1" stroke-linejoin="round"/><circle cx="8" cy="8" r="2.3" fill="none" stroke="#fff" stroke-width="1.1"/></svg>
</div></body></html>
